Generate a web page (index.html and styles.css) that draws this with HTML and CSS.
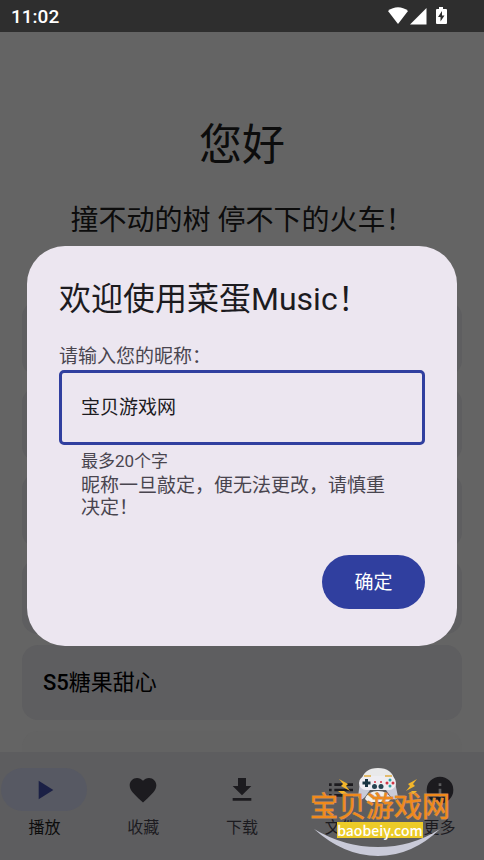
FILE: index.html
```html
<!DOCTYPE html>
<html lang="zh-CN">
<head>
    <meta charset="UTF-8">
    <meta name="viewport" content="width=device-width, initial-scale=1.0">
    <title>菜蛋Music</title>
    <link rel="stylesheet" href="styles.css">
</head>
<body>
    <div class="screen">
        <!-- 状态栏 -->
        <header class="status-bar">
            <span class="clock">11:02</span>
            <svg class="status-icons" width="60" height="20" viewBox="0 0 60 20">
                <path fill="#fff" d="M0 5C6 0 14 0 20 5L10 18Z"/>
                <path fill="#fff" d="M38.500 2V18.500H22Z"/>
                <path fill="#fff" d="M51 1h4v2h3q1 0 1 1v13q0 1-1 1h-9q-1 0-1-1V4q0-1 1-1h2z"/>
                <path fill="#2e2e2e" d="M54 5l-4 6h2.500v4.500l4-6H54z"/>
            </svg>
        </header>

        <!-- 播放页 -->
        <main class="home">
            <h1 class="hello">您好</h1>
            <p class="motto">撞不动的树 停不下的火车！</p>
            <ul class="playlist">
                <li class="card"></li>
                <li class="card"></li>
                <li class="card"></li>
                <li class="card"></li>
                <li class="card"><span class="code">S5</span>糖果甜心</li>
                <li class="card card-next"></li>
            </ul>
        </main>

        <!-- 底部导航 -->
        <nav class="tabs">
            <a class="tab active" href="#play">
                <span class="pill"><svg width="32" height="32" viewBox="0 0 24 24"><path d="M8 5v14l11-7z"/></svg></span>
                播放
            </a>
            <a class="tab" href="#fav">
                <span class="pill"><svg width="32" height="32" viewBox="0 0 24 24"><path d="M12 21.350l-1.450-1.320C5.400 15.360 2 12.280 2 8.500 2 5.420 4.420 3 7.500 3c1.740 0 3.410.81 4.500 2.090C13.090 3.810 14.760 3 16.500 3 19.580 3 22 5.420 22 8.500c0 3.780-3.400 6.860-8.550 11.540z"/></svg></span>
                收藏
            </a>
            <a class="tab" href="#download">
                <span class="pill"><svg width="32" height="32" viewBox="0 0 24 24"><path d="M19 9h-4V3H9v6H5l7 7zM5 18v2h14v-2z"/></svg></span>
                下载
            </a>
            <a class="tab" href="#files">
                <span class="pill"><svg width="32" height="32" viewBox="0 0 24 24"><path d="M3 13h2v-2H3zm0 4h2v-2H3zm0-8h2V7H3zm4 4h14v-2H7zm0 4h14v-2H7zM7 7v2h14V7z"/></svg></span>
                文件
            </a>
            <a class="tab" href="#more">
                <span class="pill"><svg width="32" height="32" viewBox="0 0 24 24"><path d="M12 2a10 10 0 1 0 0 20 10 10 0 0 0 0-20zm1 15h-2v-6h2zm0-8h-2V7h2z"/></svg></span>
                更多
            </a>
        </nav>
    </div>

    <!-- 昵称弹窗 -->
    <div class="overlay">
        <form class="dialog">
            <h2 class="dialog-title">欢迎使用菜蛋Music！</h2>
            <label class="dialog-label" for="nickname">请输入您的昵称：</label>
            <input class="nickname" id="nickname" type="text" value="宝贝游戏网">
            <div class="hint">
                <p class="limit">最多20个字</p>
                <p class="warn">昵称一旦敲定，便无法更改，请慎重决定！</p>
            </div>
            <button class="confirm" type="button">确定</button>
        </form>
    </div>

    <!-- 水印 -->
    <div class="watermark">
        <svg class="gamepad" width="144" height="92" viewBox="0 0 144 92">
            <path fill="#c9cad8" d="M6 61Q36 79 70 79T132 61Q104 88 70 88T6 61Z"/>
            <path fill="#e9e9ea" d="M53 13Q56 0 70 0T87 13Z"/>
            <path fill="#c9cbd8" d="M52 14L50 29Q52 34 57 29L62 22H78L83 29Q88 34 90 29L87 14Z"/>
            <path fill="#f1efed" d="M57 31Q60 23 70 23T83 31L80 34H60Z"/>
            <rect fill="#eeedf2" x="51" y="8" width="37" height="14" rx="7"/>
            <path fill="none" stroke="#e0ac42" stroke-width="1.500" d="M56 8h7M77 8h7"/>
            <path fill="none" stroke="#173441" stroke-width="3" d="M58.500 11v8M54.500 15h8"/>
            <g fill="#254350"><circle cx="66.500" cy="18.500" r="2.500"/><circle cx="73" cy="18.500" r="2.500"/></g>
            <g fill="#cf3646"><circle cx="67" cy="14" r="1"/><circle cx="73" cy="14" r="1"/><circle cx="79" cy="15" r="1.500"/><circle cx="85" cy="15" r="1.500"/></g>
            <g fill="#2fa3a5"><circle cx="82" cy="12" r="1.500"/><circle cx="82" cy="18" r="1.500"/></g>
            <path fill="#f2b62b" d="M31 11l9 5-2 2 4 5-9-5 2-2zM30 23l6 0 4 3-6 0zM109 11l-9 5 2 2-4 5 9-5-2-2zM109 23l-5 0-4 3 6 0z"/>
        </svg>
        <div class="mark-name">宝贝游戏网</div>
        <div class="mark-url">baobeiy.com</div>
    </div>
</body>
</html>
```
FILE: styles.css
```css
* {
    box-sizing: border-box;
}
body {
    margin: 0;
    font-family: Roboto, "Noto Sans CJK SC", sans-serif;
    background: #646464;
    color: #0c0c0c;
}
h1, h2, p, ul {
    margin: 0;
    padding: 0;
    font-weight: 400;
}
.screen {
    height: 100vh;
    display: flex;
    flex-direction: column;
}

/* 状态栏 */
.status-bar {
    height: 32px;
    flex: none;
    display: flex;
    justify-content: space-between;
    align-items: center;
    padding: 0 36px 0 11px;
    background: #2e2e2e;
    color: #fff;
}
.clock {
    font-size: 19px;
    font-weight: 500;
}

/* 播放页 */
.home {
    flex: 1;
    min-height: 0;
    overflow: hidden;
    padding: 81px 22px 0;
    text-align: center;
}
.hello {
    font-size: 43px;
    line-height: 64px;
}
.motto {
    margin-top: 24px;
    font-size: 28px;
    line-height: 40px;
}
.playlist {
    display: flex;
    flex-direction: column;
    gap: 11px;
    margin-top: 60px;
    list-style: none;
}
.card {
    height: 75px;
    flex: none;
    padding: 0 21px;
    border-radius: 16px;
    background: #5e5e60;
    color: #000;
    font-size: 22px;
    line-height: 75px;
    text-align: left;
}
.card-next {
    background: #636363;
}
.code {
    font-weight: 500;
}

/* 底部导航 */
.tabs {
    height: 108px;
    flex: none;
    display: flex;
    gap: 10px;
    padding-top: 16px;
    background: #5d5d5f;
}
.tab {
    flex: 1;
    display: flex;
    flex-direction: column;
    align-items: center;
    gap: 5px;
    color: #1c1b1f;
    font-size: 16px;
    line-height: 24px;
    text-decoration: none;
}
.pill {
    width: 86px;
    height: 43px;
    display: flex;
    justify-content: center;
    align-items: center;
    border-radius: 22px;
    fill: #1c1b1f;
}
.active {
    color: #0c0c0c;
}
.active .pill {
    background: #575963;
    fill: #1b2045;
}

/* 弹窗 */
.overlay {
    position: absolute;
    inset: 32px 0 0;
    display: flex;
    justify-content: center;
    align-items: center;
    padding: 0 27px;
}
.dialog {
    width: 100%;
    display: flex;
    flex-direction: column;
    padding: 32px 32px 37px;
    border-radius: 38px;
    background: #ece6f0;
    color: #49454f;
    font-size: 19px;
}
.dialog-title {
    color: #1c1b1f;
    font-size: 32px;
    line-height: 43px;
}
.dialog-label {
    margin-top: 22px;
    line-height: 27px;
}
.nickname {
    height: 75px;
    padding: 0 19px 4px;
    border: 3px solid #303f9f;
    border-radius: 5px;
    outline: none;
    background: none;
    color: #1c1b1f;
    font: inherit;
}
.hint {
    padding: 4px 22px 0;
}
.limit {
    margin-bottom: 2px;
    font-size: 17px;
    line-height: 24px;
}
.warn {
    line-height: 22px;
}
.confirm {
    width: 103px;
    height: 54px;
    align-self: flex-end;
    margin-top: 36px;
    padding: 0 0 4px;
    border: none;
    border-radius: 27px;
    background: #303f9f;
    color: #fff;
    font: inherit;
    cursor: pointer;
}

/* 水印 */
.watermark {
    position: absolute;
    right: 32px;
    bottom: 0;
    width: 144px;
    height: 92px;
    display: flex;
    flex-direction: column;
    align-items: center;
    padding-top: 26px;
    pointer-events: none;
}
.gamepad {
    position: absolute;
    inset: 0;
}
.mark-name {
    position: relative;
    color: #f08a1c;
    font-size: 28px;
    line-height: 28px;
    white-space: nowrap;
    -webkit-text-stroke: 1px #c98d58;
    paint-order: stroke fill;
}
.mark-url {
    position: relative;
    width: 86px;
    background: #eccb28;
    color: #fff;
    font-family: "Noto Sans CJK SC", sans-serif;
    font-size: 14px;
    font-weight: 500;
    line-height: 16px;
    text-align: center;
}
```
